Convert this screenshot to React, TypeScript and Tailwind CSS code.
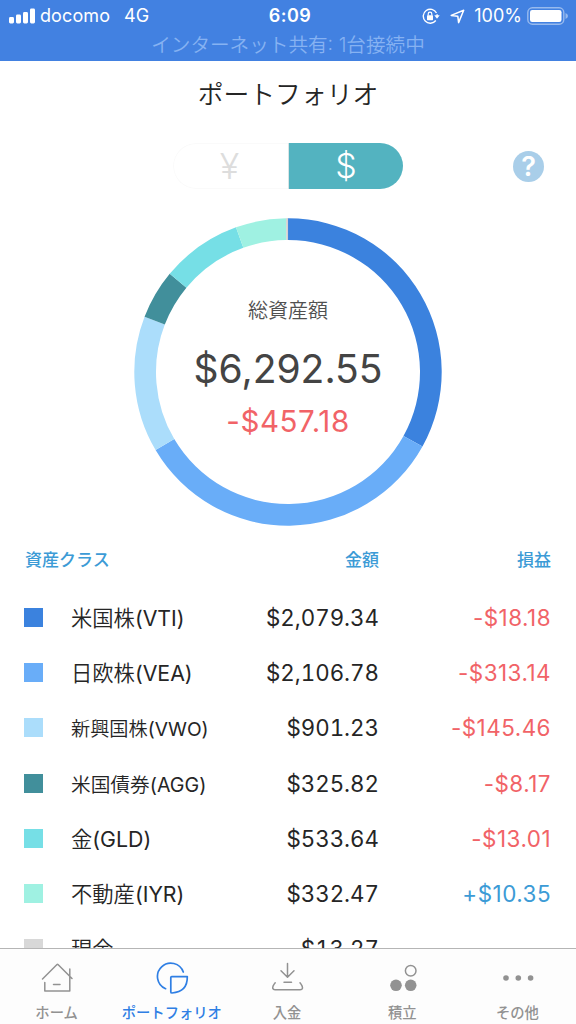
import React from "react";

type Asset = { name: string; ticker: string; amount: string; value: number; profit: string; color: string; nameClass: string };

const assets: Asset[] = [
  { name: "米国株", ticker: "(VTI)", amount: "$2,079.34", value: 2079.34, profit: "-$18.18", color: "#3b82de", nameClass: "text-[21.3px]" },
  { name: "日欧株", ticker: "(VEA)", amount: "$2,106.78", value: 2106.78, profit: "-$313.14", color: "#69adf8", nameClass: "text-[21.3px]" },
  { name: "新興国株", ticker: "(VWO)", amount: "$901.23", value: 901.23, profit: "-$145.46", color: "#abddfb", nameClass: "text-[19.2px] pt-[2px]" },
  { name: "米国債券", ticker: "(AGG)", amount: "$325.82", value: 325.82, profit: "-$8.17", color: "#418f9b", nameClass: "text-[19.7px] pt-[2px]" },
  { name: "金", ticker: "(GLD)", amount: "$533.64", value: 533.64, profit: "-$13.01", color: "#76dfe6", nameClass: "text-[21.3px]" },
  { name: "不動産", ticker: "(IYR)", amount: "$332.47", value: 332.47, profit: "+$10.35", color: "#9ff1e2", nameClass: "text-[21.3px]" },
  { name: "現金", ticker: "", amount: "$13.27", value: 13.27, profit: "", color: "#d8d8d8", nameClass: "text-[21.3px]" },
];

const total = assets.reduce((sum, a) => sum + a.value, 0);

function ring(from: number, to: number) {
  const point = (r: number, t: number) => {
    const a = t * Math.PI * 2;
    return `${154 + r * Math.sin(a)} ${154 - r * Math.cos(a)}`;
  };
  const large = to - from > 0.5 ? 1 : 0;
  return `M${point(153.7, from)}A153.7 153.7 0 ${large} 1 ${point(153.7, to)}L${point(132, to)}A132 132 0 ${large} 0 ${point(132, from)}Z`;
}

function Donut() {
  let start = 0;
  return (
    <svg width="308" height="308" viewBox="0 0 308 308" className="col-start-1 row-start-1">
      {assets.map((a) => {
        const from = start;
        start += a.value / total;
        return <path key={a.name} d={ring(from, start)} fill={a.color} />;
      })}
      <path d="M153.4 0.3V22" stroke="#d2d2d2" strokeWidth="1.3" />
    </svg>
  );
}

function StatusBar() {
  return (
    <header className="h-[61px] shrink-0 bg-[#4281e1] text-white">
      <div className="grid h-8 grid-cols-[1fr_auto_1fr] items-center pl-[9px] pr-[9px] text-[18px] leading-8">
        <div className="flex items-center">
          <svg width="26" height="16" viewBox="0 0 26 16" fill="currentColor">
            <rect x="0" y="9" width="5" height="6.5" rx="1.4" />
            <rect x="7" y="6.5" width="5" height="9" rx="1.4" />
            <rect x="14" y="4" width="5" height="11.5" rx="1.4" />
            <rect x="21" y="0.5" width="5" height="15" rx="1.4" />
          </svg>
          <span className="ml-[5px] tracking-[0.1px]">docomo</span>
          <span className="ml-[14px]">4G</span>
        </div>
        <div className="pl-1 text-[18px] font-semibold tracking-[0.5px]">6:09</div>
        <div className="flex items-center justify-end">
          <svg width="18" height="17" viewBox="0 0 18 17" fill="none" stroke="currentColor" strokeWidth="1.4">
            <path d="M14.5 5A7 7 0 1 0 13.8 12.5M15.1 6.2V8.5" />
            <path d="M12.3 7.3h5.4l-2.7 3.5Z" fill="currentColor" stroke="none" />
            <rect x="5" y="7.2" width="6" height="5" rx="0.6" fill="currentColor" stroke="none" />
            <path d="M6.2 7.5V6a1.8 1.8 0 0 1 3.6 0v1.5" strokeWidth="1.2" />
          </svg>
          <svg width="15" height="15" viewBox="0 0 15 15" fill="none" stroke="currentColor" strokeWidth="1.5" strokeLinejoin="round" className="ml-[10px]">
            <path d="M13.7 1.2 8.6 13.6 7.8 7.2 1.2 6.4Z" />
          </svg>
          <span className="ml-[9px]">100%</span>
          <svg width="41" height="18" viewBox="0 0 41 18" className="-mr-px ml-[5px]">
            <rect x="0.8" y="0.8" width="36" height="16.4" rx="4.6" fill="none" stroke="white" strokeOpacity="0.45" strokeWidth="1.4" />
            <rect x="3" y="3" width="31.5" height="12" rx="2.2" fill="white" />
            <path d="M38.5 6Q41 7 41 9T38.5 12Z" fill="white" fillOpacity="0.45" />
          </svg>
        </div>
      </div>
      <p className="text-center text-[19.6px] font-[350] leading-[26px] text-[#86b2f2]">インターネット共有: 1台接続中</p>
    </header>
  );
}

const tabs = [
  { label: "ホーム", active: false, icon: <path d="M2.5 17 17 2.5Q17.5 2 18 2.5L32 16.5M4.8 20.5V29h25V7M13.5 22.5h6.5" /> },
  { label: "ポートフォリオ", active: true, icon: <><path d="M28.3 10A13.3 13.3 0 1 0 10.6 26.7" strokeWidth="1.7" /><path d="M15.8 15.5Q15.8 14.6 16.7 14.6H32.3Q32.6 30 17 31Q15.8 31 15.8 30Z" strokeWidth="1.7" /></> },
  { label: "入金", active: false, icon: <path d="M17.5 1.5V15M11 8.7l6.5 6.5L24 8.7M14 20.3h7.5M5.2 20.8Q2.2 24.5 2.8 26.6Q3.2 27.8 5 27.8H30.2Q32 27.8 32.4 26.6Q33 24.5 30 20.8" /> },
  { label: "積立", active: false, icon: <><circle cx="10" cy="23.3" r="5.8" fill="currentColor" stroke="none" /><circle cx="24.7" cy="23.3" r="5.8" fill="currentColor" stroke="none" /><circle cx="24.7" cy="8.8" r="5.3" /></> },
  { label: "その他", active: false, icon: <g fill="currentColor" stroke="none"><circle cx="5" cy="16" r="2.8" /><circle cx="17.3" cy="16" r="2.8" /><circle cx="29.6" cy="16" r="2.8" /></g> },
];

export default function App() {
  return (
    <main className="flex h-[1024px] w-[576px] flex-col overflow-hidden bg-white font-['Inter','Noto_Sans_CJK_JP',sans-serif] text-[#252525]">
      <StatusBar />
      <section className="flex min-h-0 flex-1 flex-col overflow-hidden">
        <h1 className="h-[82px] shrink-0 pt-[15px] text-center text-[25.8px] font-[350] leading-[38px]">ポートフォリオ</h1>
        <div className="grid h-[46px] shrink-0 grid-cols-[173px_230px_1fr] items-center">
          <div className="col-start-2 flex h-[46px] items-center overflow-hidden rounded-full font-light">
            <button className="flex h-full w-[115px] items-center justify-center rounded-l-full border border-r-0 border-[#fafafa] text-[#dddddd]"><span className="mr-[3px] text-[36px] font-light leading-none">¥</span></button>
            <button className="flex h-full w-[115px] items-center justify-center border-l border-[#d8e4e5] bg-[#53b3c0] text-white"><span className="text-[34px] font-light leading-none">$</span></button>
          </div>
          <button className="ml-[110px] flex h-[31px] w-[31px] items-center justify-center rounded-full bg-[#a9cee9] text-[27px] font-semibold leading-none text-white">?</button>
        </div>
        <div className="mt-[29px] grid h-[308px] shrink-0 place-items-center">
          <Donut />
          <div className="col-start-1 row-start-1 flex h-[308px] flex-col items-center pt-[78px]">
            <p className="text-[20px] font-[350] leading-[30px] text-[#505050]">総資産額</p>
            <p className="mt-[18px] text-[39px] font-normal leading-[50px] text-[#444]">$6,292.55</p>
            <p className="mt-[7px] text-[29.5px] font-normal leading-[40px] tracking-[0.6px] text-[#f16367]">-$457.18</p>
          </div>
        </div>
        <div className="grid h-[64px] shrink-0 grid-cols-[190px_164px_172px] pl-[25px] pr-[25px] pt-[21px] text-[17px] font-medium leading-[26px] text-[#3c9bd6]">
          <span>資産クラス</span><span className="text-right">金額</span><span className="text-right">損益</span>
        </div>
        <div className="shrink-0">
          {assets.map((a) => (
            <div key={a.name} className="grid h-[55.3px] grid-cols-[46px_180px_128px_172px] items-center pl-[25px] pr-[25px]">
              <svg width="19" height="19" className="-ml-px -mt-px"><rect width="19" height="19" fill={a.color} /></svg>
              <span className={`${a.nameClass} whitespace-nowrap font-[350] leading-8`}>{a.name}<span className="font-normal">{a.ticker}</span></span>
              <span className="text-right text-[22.3px] font-normal tabular-nums leading-8">{a.amount}</span>
              <span className={`text-right text-[22.4px] font-normal leading-8 tracking-[0.5px] ${a.profit.startsWith("+") ? "text-[#3c9bd6]" : "text-[#f16367]"}`}>{a.profit}</span>
            </div>
          ))}
        </div>
      </section>
      <nav className="grid h-[76px] shrink-0 grid-cols-5 border-t border-[#b5b5b5] bg-[#fdfdfd]">
        {tabs.map((t) => (
          <button key={t.label} className={`flex flex-col items-center pt-[13px] ${t.active ? "text-[#2f7fe4]" : "text-[#929292]"}`}>
            <svg width="35" height="33" viewBox="0 0 35 33" fill="none" stroke="currentColor" strokeWidth="1.5" strokeLinecap="round" strokeLinejoin="round">{t.icon}</svg>
            <span className="mr-[2px] mt-[8px] whitespace-nowrap text-[14.3px] font-medium leading-[20px]">{t.label}</span>
          </button>
        ))}
      </nav>
    </main>
  );
}
